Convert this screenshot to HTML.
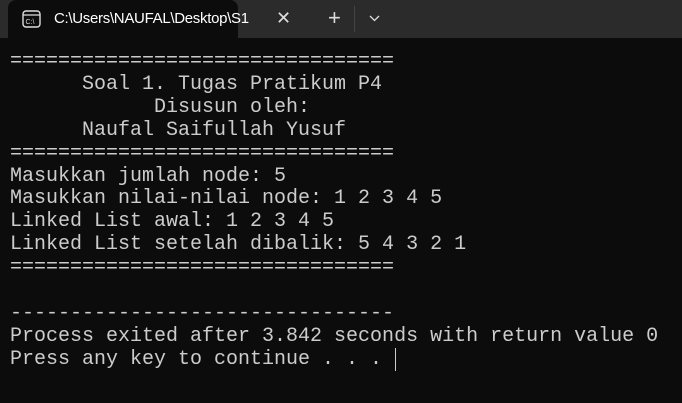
<!DOCTYPE html>
<html><head><meta charset="utf-8"><style>
html,body{margin:0;padding:0;width:682px;height:403px;background:#0c0c0c;overflow:hidden}
.bar{position:absolute;left:0;top:0;width:682px;height:38px;background:#2b2b2b}
.tab{position:absolute;left:8px;top:0;width:230px;height:38px;background:#0c0c0c;border-radius:8px 8px 0 0}
.title{position:absolute;left:54px;top:10px;font:15px "Liberation Sans",sans-serif;color:#fff;letter-spacing:-0.3px}
.x{position:absolute;left:276px;top:8px;color:#ddd;font:18px "Liberation Sans",sans-serif}
.plus{position:absolute;left:328px;top:5px;color:#ddd;font:22px "Liberation Sans",sans-serif}
.sep{position:absolute;left:354px;top:6px;width:1px;height:26px;background:#444}
pre{position:absolute;left:10px;top:51px;margin:0;font:20px/22.9px "Liberation Mono",monospace;color:#cccccc}
.cur{position:absolute;left:395px;top:348px;width:1px;height:23px;background:#ccc}
</style></head><body>
<div class="bar"></div>
<div class="tab"></div>
<svg style="position:absolute;left:22px;top:10px" width="20" height="18" viewBox="0 0 20 18"><rect x="1" y="1" width="17" height="16" rx="3" fill="none" stroke="#ddd" stroke-width="1.4"/><line x1="1" y1="5" x2="18" y2="5" stroke="#ddd" stroke-width="1.2"/><text x="3.5" y="14" font-size="7" fill="#ddd" font-family="Liberation Sans">C:\</text></svg>
<div class="title">C:\Users\NAUFAL\Desktop\S1</div>
<div class="x">✕</div>
<div class="plus">+</div>
<div class="sep"></div>
<svg style="position:absolute;left:369px;top:15px" width="11" height="7" viewBox="0 0 11 7"><path d="M1 1 L5.5 5.5 L10 1" fill="none" stroke="#ddd" stroke-width="1.3"/></svg>
<pre>================================
      Soal 1. Tugas Pratikum P4
            Disusun oleh:
      Naufal Saifullah Yusuf
================================
Masukkan jumlah node: 5
Masukkan nilai-nilai node: 1 2 3 4 5
Linked List awal: 1 2 3 4 5
Linked List setelah dibalik: 5 4 3 2 1
================================

--------------------------------
Process exited after 3.842 seconds with return value 0
Press any key to continue . . . </pre>
<div class="cur"></div>
</body></html>
